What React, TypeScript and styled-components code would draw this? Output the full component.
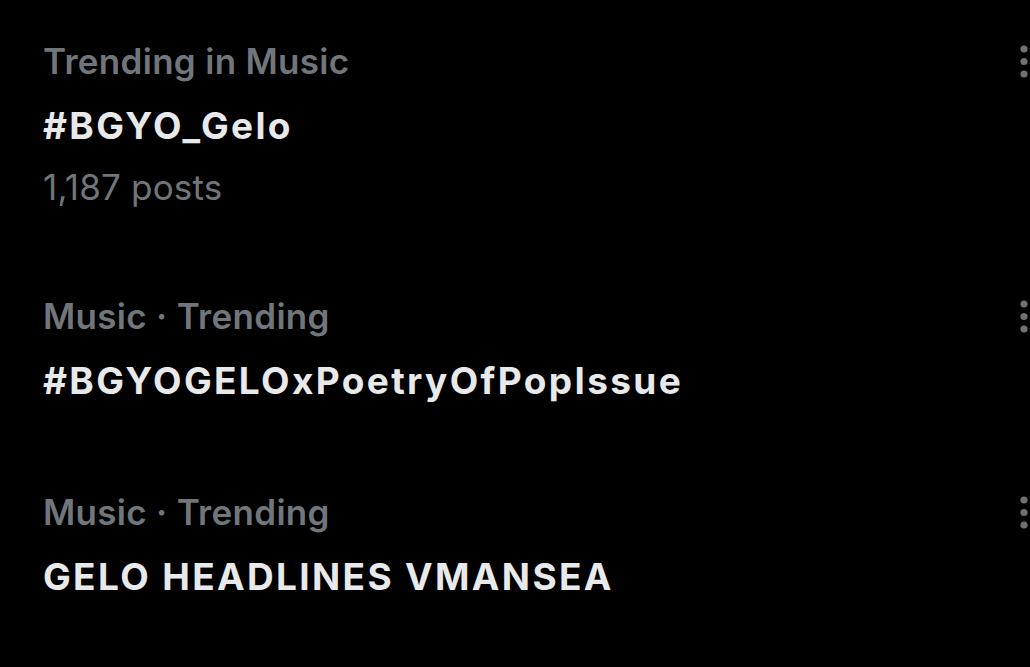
import React from "react";
import styled, { createGlobalStyle } from "styled-components";

const Global = createGlobalStyle`
  html, body { margin: 0; padding: 0; background: #000; }
  body { font-family: Inter, "Noto Sans", sans-serif; -webkit-font-smoothing: antialiased; }
`;

const Page = styled.div`
  width: 1030px;
  height: 667px;
  overflow: hidden;
  background: #000;
  box-sizing: border-box;
  padding-top: 41px;
`;

const List = styled.div`
  display: flex;
  flex-direction: column;
  gap: 89px;
`;

const Row = styled.div`
  display: grid;
  grid-template-columns: 1fr auto;
  align-items: start;
  padding-left: 43px;
  padding-right: 2px;
`;

const Body = styled.div`
  display: flex;
  flex-direction: column;
`;

const Label = styled.div`
  color: #71767b;
  font-size: 35px;
  line-height: 40px;
  font-weight: 600;
  letter-spacing: 0.3px;
  white-space: nowrap;
`;

const Title = styled.div`
  color: #e7e9ea;
  font-size: 37px;
  line-height: 44px;
  font-weight: 700;
  letter-spacing: 2.35px;
  margin-top: 23px;
  white-space: nowrap;
`;

const Sub = styled.div`
  color: #71767b;
  font-size: 35px;
  line-height: 40px;
  font-weight: 400;
  letter-spacing: 0.2px;
  margin-top: 19px;
  white-space: nowrap;
`;

const MoreButton = styled.div`
  height: 40px;
  display: flex;
  align-items: center;
  color: #6e7175;
`;

const More = () => (
  <MoreButton>
    <svg width="8" height="33" viewBox="0 0 8 33" fill="currentColor">
      <circle cx="4" cy="4" r="3.6" />
      <circle cx="4" cy="16.5" r="3.6" />
      <circle cx="4" cy="29" r="3.6" />
    </svg>
  </MoreButton>
);

type Trend = { label: string; title: string; sub?: string };

const trends: Trend[] = [
  { label: "Trending in Music", title: "#BGYO_Gelo", sub: "1,187 posts" },
  { label: "Music · Trending", title: "#BGYOGELOxPoetryOfPopIssue" },
  { label: "Music · Trending", title: "GELO HEADLINES VMANSEA" },
];

export default function App() {
  return (
    <>
      <Global />
      <Page>
        <List>
          {trends.map((t, i) => (
            <Row key={i}>
              <Body>
                <Label>{t.label}</Label>
                <Title>{t.title}</Title>
                {t.sub && <Sub>{t.sub}</Sub>}
              </Body>
              <More />
            </Row>
          ))}
        </List>
      </Page>
    </>
  );
}
